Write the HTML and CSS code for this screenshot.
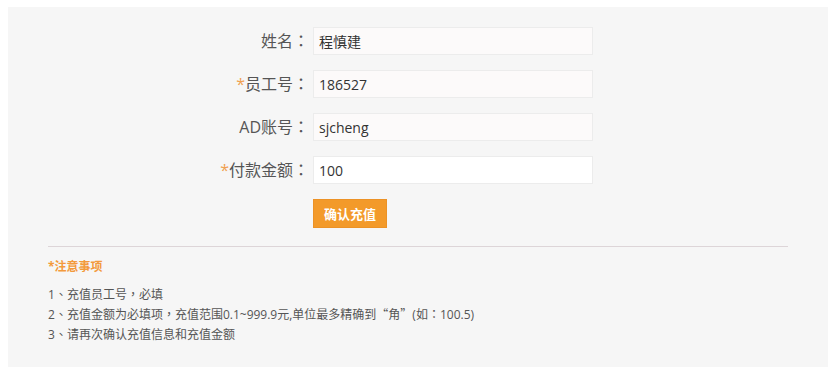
FILE: index.html
```html
<!DOCTYPE html>
<html lang="zh-CN">
<head>
  <meta charset="UTF-8">
  <title>充值</title>
  <link rel="stylesheet" href="styles.css">
</head>
<body>
<div class="panel">
  <form class="recharge-form">
    <label class="form-label" for="name">姓名<span class="punct">：</span></label>
    <input class="form-input readonly" id="name" type="text" value="程慎建" readonly>

    <label class="form-label" for="staff-no"><span class="required">*</span>员工号<span class="punct">：</span></label>
    <input class="form-input readonly" id="staff-no" type="text" value="186527" readonly>

    <label class="form-label" for="ad">AD账号<span class="punct">：</span></label>
    <input class="form-input readonly" id="ad" type="text" value="sjcheng" readonly>

    <label class="form-label" for="amount"><span class="required">*</span>付款金额<span class="punct">：</span></label>
    <input class="form-input" id="amount" type="text" value="100">

    <div class="form-actions">
      <button type="button" class="btn-submit">确认充值</button>
    </div>
  </form>

  <hr class="divider">

  <div class="notice">
    <h4 class="notice-title">*注意事项</h4>
    <ul class="notice-list">
      <li>1<span class="punct">、</span>充值员工号<span class="punct">，</span>必填</li>
      <li>2<span class="punct">、</span>充值金额为必填项<span class="punct">，</span>充值范围0.1~999.9元,单位最多精确到<span class="punct">“</span>角<span class="punct">”</span>(如<span class="punct">：</span>100.5)</li>
      <li>3<span class="punct">、</span>请再次确认充值信息和充值金额</li>
    </ul>
  </div>
</div>
</body>
</html>
```

FILE: styles.css
```css
body {
    margin: 7px 10px 8px 8px;
    background: #fff;
    font-family: "Open Sans", "Noto Sans CJK SC", sans-serif;
    color: #555;
}

/* 全角标点占满一个字宽并居中 */
.punct {
    display: inline-block;
    width: 1em;
    line-height: 1;
    text-align: center;
    font-family: "Noto Sans CJK TC", sans-serif;
}

.panel {
    background-color: #f6f6f6;
    height: 360px;
    box-sizing: border-box;
    padding: 20px 40px 0;
}

.recharge-form {
    display: grid;
    grid-template-columns: 261px 280px;
    column-gap: 4px;
    row-gap: 15px;
    align-items: center;
}

.form-label {
    text-align: right;
    font-size: 16px;
    color: #555;
    line-height: 28px;
}

.required {
    color: #f0a050;
}

.form-input {
    box-sizing: border-box;
    height: 28px;
    width: 280px;
    padding: 0 5px;
    border: 1px solid #ececec;
    background: #fff;
    font-family: inherit;
    font-size: 14px;
    color: #333;
    outline: none;
}

.form-input.readonly {
    background: #fcfafa;
}

.form-actions {
    grid-column: 2;
}

.btn-submit {
    height: 29px;
    padding: 0 10px;
    background-color: #f39a2a;
    border: 1px solid #ec9226;
    color: #fff;
    font-family: inherit;
    font-size: 13px;
    font-weight: bold;
    cursor: pointer;
}

.divider {
    margin: 18px 0 0;
    border: none;
    border-top: 1px solid #ddd5d8;
}

.notice-title {
    margin: 10px 0 8px;
    font-size: 12px;
    line-height: 20px;
    color: #f39a3c;
}

.notice-list {
    list-style: none;
    margin: 0;
    padding: 0;
    font-size: 12px;
    line-height: 20px;
    color: #555;
}
```
